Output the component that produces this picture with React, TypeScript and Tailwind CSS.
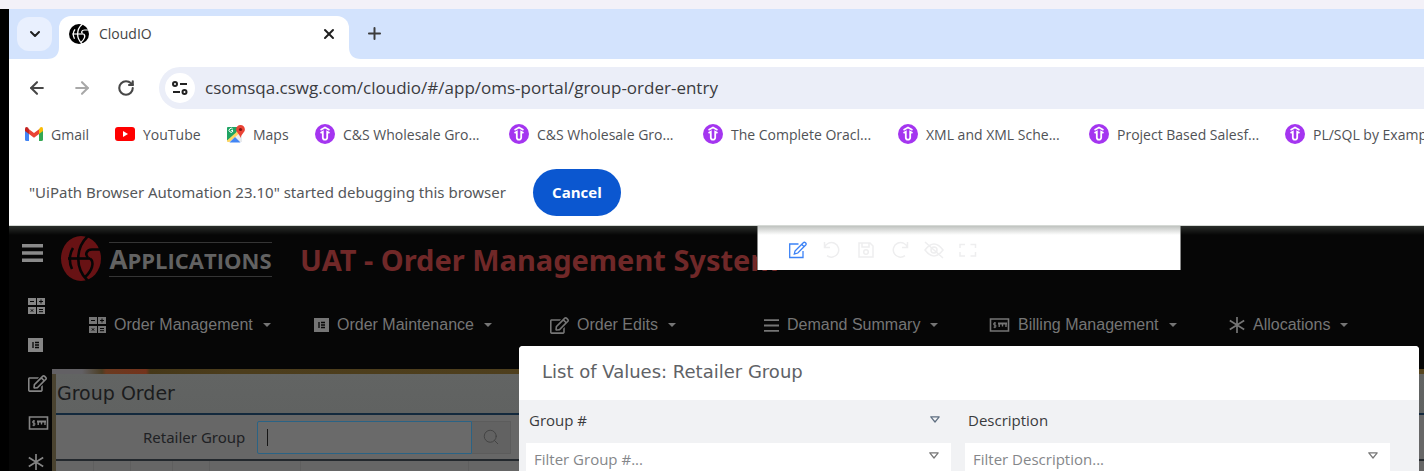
import React from "react";
import { ChevronDown, X, Plus, ArrowLeft, ArrowRight, RotateCw, Search } from "lucide-react";
import { FaRegEdit } from "react-icons/fa";

type IconProps = { className?: string };

function Emblem({ className, mark }: { className?: string; mark: string }) {
  return (
    <svg viewBox="0 0 40 45" className={className} preserveAspectRatio="none" aria-hidden="true">
      <ellipse cx="20" cy="22.5" rx="20" ry="22.5" fill="currentColor" />
      <g fill="none" stroke={mark}>
        <path d="M27 0C14 12 14 33 27 45" strokeWidth="2.600" />
        <path d="M12 12C8 18 8 27 11 33" strokeWidth="2.600" />
        <path d="M7 22.500H29" strokeWidth="2.600" />
        <path d="M40 13.500H31C25 13.500 24 19 27 21.500" strokeWidth="2.600" />
        <path d="M29 22.500C34 26 31 35 24 41" strokeWidth="2.600" />
      </g>
    </svg>
  );
}

function CalcIcon({ className }: IconProps) {
  return (
    <svg viewBox="0 0 17 16" className={className} aria-hidden="true">
      <path d="M0 0h8v7H0zM9 0h8v7H9zM0 9h8v7H0zM9 9h8v7H9z" fill="currentColor" />
      <path d="M2 3.500h4M11 3.500h4M13 1.500v4M2.800 11.300l2.400 2.400M5.200 11.300l-2.400 2.400M11 11.500h4M11 13.700h4" stroke="#060606" strokeWidth="1" fill="none" />
    </svg>
  );
}

function FormIcon({ className }: IconProps) {
  return (
    <svg viewBox="0 0 15 14" className={className} aria-hidden="true">
      <path d="M0 0h15v14H0z" fill="currentColor" />
      <path d="M5 4v6M7 4.500h4M7 7h4M7 9.500h4" stroke="#060606" strokeWidth="1.300" />
    </svg>
  );
}

function CheckIcon({ className }: IconProps) {
  return (
    <svg viewBox="0 0 20 14" className={className} fill="none" stroke="currentColor" aria-hidden="true">
      <path d="M1 1h18v12H1z" strokeWidth="1.600" />
      <path d="M6.500 5H4.300v2H6.300v2.200H4M5.300 4v6.200" strokeWidth="1" />
      <path d="M8.500 5.500h9" strokeWidth="2" />
      <path d="M9.700 5.500V9M13 5.500V8.500M16.500 5.500V9" strokeWidth="1.400" />
    </svg>
  );
}

function AsteriskIcon({ className }: IconProps) {
  return (
    <svg viewBox="0 0 16 16" className={className} stroke="currentColor" strokeWidth="1.700" aria-hidden="true">
      <path d="M8 0v16M0.800 3.500l14.400 9M15.200 3.500l-14.400 9" />
    </svg>
  );
}

function BarsIcon({ className }: IconProps) {
  return (
    <svg viewBox="0 0 14 14" className={className} stroke="currentColor" strokeWidth="1.800" aria-hidden="true">
      <path d="M0 2h14M0 7h14M0 12h14" />
    </svg>
  );
}

function MenuIcon({ className }: IconProps) {
  return (
    <svg viewBox="0 0 21 18" className={className} fill="currentColor" aria-hidden="true">
      <path d="M0 0h21v3.500H0zM0 7.300h21v3.400H0zM0 14.500h21v3.500H0z" />
    </svg>
  );
}

function Triangle({ className }: IconProps) {
  return (
    <svg viewBox="0 0 10 7" className={className} fill="none" stroke="currentColor" strokeLinejoin="round" aria-hidden="true">
      <path d="M0.800 0.800h8.400L5 6z" strokeWidth="1.200" />
    </svg>
  );
}

function GmailIcon() {
  return (
    <svg viewBox="0 0 18 14" className="h-[14px] w-[18px]" aria-hidden="true">
      <path d="M0 2h4v12H1.500Q0 14 0 12.500z" fill="#4285f4" />
      <path d="M14 2h4v10.500Q18 14 16.500 14H14z" fill="#34a853" />
      <path d="M14 2.500 15 .6Q17.900-.9 18 2v2l-4 3z" fill="#fbbc04" />
      <path d="M4 2.500 3 .6Q.1-.9 0 2v2l4 3z" fill="#c5221f" />
      <path d="M4 2.300 9 6l5-3.700V7L9 10.700 4 7z" fill="#ea4335" />
    </svg>
  );
}

function YouTubeIcon() {
  return (
    <svg viewBox="0 0 20 14" className="h-[14px] w-[20px]" aria-hidden="true">
      <rect width="20" height="14" rx="3" fill="#f00" />
      <path d="M8 4l5 3-5 3z" fill="#fff" />
    </svg>
  );
}

function MapsIcon() {
  return (
    <svg viewBox="0 0 19 18" className="h-[18px] w-[19px]" aria-hidden="true">
      <path d="M2 2h14v15H2Q1 17 1 16V3Q1 2 2 2z" fill="#e8eaed" />
      <path d="M2 2h10L10 9 1 16V3Q1 2 2 2z" fill="#1fa463" />
      <path d="M1 15.500 14 4l2 1v1L3.500 17H2Q1 17 1 16z" fill="#fdd663" />
      <path d="M3.500 17.500 9 12l5.500 5.500z" fill="#4285f4" />
      <path d="M7 5.500H5.200M6.800 4.200A2 2 0 1 0 7 6" stroke="#fff" strokeWidth="1" fill="none" />
      <path d="M14.500 0a4.400 4.400 0 0 1 4.400 4.400c0 3-3.400 4-4.400 8.600-1-4.600-4.400-5.600-4.400-8.600A4.400 4.400 0 0 1 14.500 0z" fill="#ea4335" />
      <circle cx="14.500" cy="4.500" r="1.600" fill="#811411" />
    </svg>
  );
}

function CourseIcon() {
  return (
    <svg viewBox="0 0 20 20" className="size-5" aria-hidden="true">
      <circle cx="10" cy="10" r="10" fill="#a435f0" />
      <path d="M5.500 6 10 3.500 14.500 6" fill="none" stroke="#fff" strokeWidth="1.600" />
      <path d="M5.500 9 7.800 7.700v5.800a2.200 2.200 0 0 0 4.400 0V7.700L14.500 9" fill="none" stroke="#fff" strokeWidth="1.800" />
    </svg>
  );
}

const bookmarks = [
  { label: "Gmail", icon: <GmailIcon />, box: "w-[90px]" },
  { label: "YouTube", icon: <YouTubeIcon />, box: "w-[111px]" },
  { label: "Maps", icon: <MapsIcon />, box: "w-[89px]" },
  { label: "C&S Wholesale Gro...", icon: <CourseIcon />, box: "w-[194px]" },
  { label: "C&S Wholesale Gro...", icon: <CourseIcon />, box: "w-[194px]" },
  { label: "The Complete Oracl...", icon: <CourseIcon />, box: "w-[195px]" },
  { label: "XML and XML Sche...", icon: <CourseIcon />, box: "w-[191px]" },
  { label: "Project Based Salesf...", icon: <CourseIcon />, box: "w-[196px]" },
  { label: "PL/SQL by Examp", icon: <CourseIcon />, box: "w-[196px]" },
];

const menus = [
  { label: "Order Management", icon: <CalcIcon className="h-4 w-[17px]" />, box: "w-[225px]" },
  { label: "Order Maintenance", icon: <FormIcon className="h-[14px] w-[15px]" />, box: "w-[236px]" },
  { label: "Order Edits", icon: <FaRegEdit className="size-[19px]" />, box: "w-[214px]" },
  { label: "Demand Summary", icon: <BarsIcon className="size-[15px]" />, box: "w-[225px]" },
  { label: "Billing Management", icon: <CheckIcon className="h-[14px] w-[21px]" />, box: "w-[240px]" },
  { label: "Allocations", icon: <AsteriskIcon className="size-4" />, box: "w-[130px]" },
];

function BrowserChrome() {
  return (
    <header className="bg-white">
      <div className="flex h-[50px] bg-[#d3e3fd] pl-2 pt-[7px]">
        <button aria-label="Search tabs" className="mt-px flex h-[34px] w-[35px] items-center justify-center rounded-xl bg-[#e9f0fe] text-[#1f1f1f]">
          <ChevronDown className="size-4" strokeWidth={3} />
        </button>
        <svg viewBox="0 0 12 12" className="ml-[-5px] size-3 self-end" aria-hidden="true">
          <path d="M12 0v12H0Q12 12 12 0z" fill="#fff" />
        </svg>
        <div className="flex w-[290px] items-center rounded-t-xl bg-white pb-2 pl-[10px] pr-3">
          <Emblem className="size-5 text-black" mark="#fff" />
          <span className="ml-[10px] flex-1 text-[14px] text-[#444]">CloudIO</span>
          <button aria-label="Close tab" className="text-[#1f1f1f]">
            <X className="size-4" strokeWidth={3} />
          </button>
        </div>
        <svg viewBox="0 0 12 12" className="size-3 self-end" aria-hidden="true">
          <path d="M0 0v12h12Q0 12 0 0z" fill="#fff" />
        </svg>
        <button aria-label="New tab" className="mb-2 ml-1 self-center text-[#3c3c3c]">
          <Plus className="size-[19px]" strokeWidth={2.500} />
        </button>
      </div>

      <div className="flex h-[57px] items-center pl-[18px]">
        <button aria-label="Back" className="text-[#474747]"><ArrowLeft className="size-5" strokeWidth={2.500} /></button>
        <button aria-label="Forward" className="ml-[25px] text-[#a8a8a8]"><ArrowRight className="size-5" strokeWidth={2.500} /></button>
        <button aria-label="Reload" className="ml-[25px] text-[#474747]"><RotateCw className="size-[18px]" strokeWidth={2.800} /></button>
        <div className="ml-6 flex h-[42px] flex-1 items-center rounded-l-full bg-[#ebeef8] pl-[6px]">
          <button aria-label="View site information" className="flex size-[30px] shrink-0 items-center justify-center rounded-full bg-white text-[#222]">
            <svg viewBox="0 0 16 14" className="h-[14px] w-4" fill="none" stroke="currentColor" strokeWidth="2" aria-hidden="true">
              <circle cx="3" cy="3" r="2" />
              <path d="M8 3h7M1 11h7" />
              <circle cx="12.500" cy="11" r="2" />
            </svg>
          </button>
          <input
            aria-label="Address"
            className="ml-[10px] min-w-0 flex-1 bg-transparent text-[17px] text-[#3a3b40] outline-none"
            defaultValue="csomsqa.cswg.com/cloudio/#/app/oms-portal/group-order-entry"
          />
        </div>
      </div>

      <nav aria-label="Bookmarks" className="flex h-[36px] items-center overflow-hidden pl-4">
        {bookmarks.map((b, i) => (
          <a key={i} href="#" className={`flex shrink-0 items-center gap-2 whitespace-nowrap text-[14px] text-[#505256] ${b.box}`}>
            {b.icon}
            {b.label}
          </a>
        ))}
      </nav>

      <div className="flex h-[74px] items-center border-b border-[#d5d9d5] pl-5 pt-2 font-['Noto_Sans',sans-serif]">
        <p className="text-[15px] text-[#55575a]">"UiPath Browser Automation 23.10" started debugging this browser</p>
        <button className="ml-[27px] h-[47px] w-[88px] rounded-full bg-[#0b57d0] font-['Open_Sans',sans-serif] text-[15px] font-bold text-white">Cancel</button>
      </div>
    </header>
  );
}

function Toolbar() {
  return (
    <div className="absolute left-[748px] top-0 flex h-[44px] w-[424px] items-center gap-[14px] border-x border-[#888] bg-white pl-[30px] pt-1 text-[#eeeeef]">
      <button aria-label="Edit" className="text-[#3b82f6]">
        <svg viewBox="0 0 20 18" className="h-[18px] w-5" fill="none" stroke="currentColor" strokeWidth="1.300" aria-hidden="true">
          <path d="M10.500 3H1.700v13.500H15V10M7 10l8.300-8.300q1-1 2.200 0 1.200 1.200.2 2.300L9.800 12l-3.500 1zM13.700 3.300l2.400 2.400" />
        </svg>
      </button>
      <button aria-label="Undo">
        <svg viewBox="0 0 20 18" className="h-[18px] w-5" fill="none" stroke="currentColor" strokeWidth="1.500" aria-hidden="true">
          <path d="M2.500 1v5.500H8M2.500 6.500A7.300 7.300 0 1 1 5 14.700" />
        </svg>
      </button>
      <button aria-label="Save">
        <svg viewBox="0 0 20 18" className="h-[18px] w-5" fill="none" stroke="currentColor" strokeWidth="1.500" aria-hidden="true">
          <path d="M3 2h11l3 3v11H3zM6 2v4h7V2" />
          <circle cx="10" cy="11" r="2.300" />
        </svg>
      </button>
      <button aria-label="Redo">
        <svg viewBox="0 0 20 18" className="h-[18px] w-5" fill="none" stroke="currentColor" strokeWidth="1.500" aria-hidden="true">
          <path d="M17.500 1v5.500H12M17.500 6.500A7.300 7.300 0 1 0 15 14.700" />
        </svg>
      </button>
      <button aria-label="Hide">
        <svg viewBox="0 0 20 18" className="h-[18px] w-5" fill="none" stroke="currentColor" strokeWidth="1.500" aria-hidden="true">
          <path d="M1 9q9-12 18 0-9 12-18 0zM1 1l18 16" />
          <circle cx="10" cy="9" r="3" />
        </svg>
      </button>
      <button aria-label="Full screen">
        <svg viewBox="0 0 20 18" className="h-[18px] w-5" fill="none" stroke="currentColor" strokeWidth="1.500" aria-hidden="true">
          <path d="M2 7V3.500h5M12.500 3.500h5V7M17.500 11v4h-5M7 15H2v-4" />
        </svg>
      </button>
    </div>
  );
}

function ValuesDialog() {
  return (
    <section role="dialog" aria-label="List of Values: Retailer Group" className="absolute bottom-0 left-[510px] right-[5px] top-[120px] flex flex-col overflow-hidden rounded-t-[4px] bg-[#f1f2f4]">
      <h2 className="flex h-[54px] shrink-0 items-center bg-white pb-1 pl-[23px] font-['DejaVu_Sans',sans-serif] text-[18px] text-[#606266]">
        List of Values: Retailer Group
      </h2>
      <div className="grid grid-cols-2 gap-x-[14px] pl-[7px] pr-[29px]">
        <div className="flex h-[43px] items-center justify-between pb-[2px] pl-[3px] pr-[11px] text-[15px] text-[#3a3b3d]">
          Group #
          <Triangle className="mb-[2px] h-[7px] w-[10px] text-[#5f6f80]" />
        </div>
        <div className="flex h-[43px] items-center pb-[2px] pl-[3px] text-[15px] text-[#3a3b3d]">Description</div>
        {["Filter Group #...", "Filter Description..."].map((text) => (
          <div key={text} className="flex h-[36px] items-start bg-white pl-2 pr-3">
            <input aria-label={text} placeholder={text} className="h-[32px] min-w-0 flex-1 bg-transparent text-[15px] outline-none placeholder:text-[#85878a]" />
            <Triangle className="mt-[9px] h-[7px] w-[10px] text-[#777]" />
          </div>
        ))}
      </div>
    </section>
  );
}

function Portal() {
  return (
    <main className="relative flex h-[245px] overflow-hidden bg-[#060606]">
      <aside className="flex w-[43px] shrink-0 flex-col text-[#858585]">
        <button aria-label="Menu" className="ml-[13px] mt-[18px] text-[#8a8a8a]"><MenuIcon className="h-[18px] w-[21px]" /></button>
        <div className="mt-6 flex flex-col pl-[19px]">
          <a href="#" aria-label="Order Management" className="flex h-[39px] items-center"><CalcIcon className="h-4 w-[17px]" /></a>
          <a href="#" aria-label="Order Maintenance" className="flex h-[39px] items-center"><FormIcon className="h-[14px] w-[15px]" /></a>
          <a href="#" aria-label="Order Edits" className="flex h-[39px] items-center"><FaRegEdit className="size-[19px]" /></a>
          <a href="#" aria-label="Billing Management" className="flex h-[39px] items-center"><CheckIcon className="h-[14px] w-[21px]" /></a>
          <a href="#" aria-label="Allocations" className="flex h-[39px] items-center"><AsteriskIcon className="size-4" /></a>
        </div>
      </aside>

      <div className="flex min-w-0 flex-1 flex-col">
        <div className="flex h-[68px] items-center pl-[9px]">
          <Emblem className="mb-1 h-[45px] w-[40px] text-[#681214]" mark="#060606" />
          <div className="mb-[2px] ml-2 flex h-[35px] w-[163px] items-center justify-center border-y border-[#353535]">
            <span className="flex items-baseline font-bold leading-none text-[#626262]">
              <span className="text-[26px]">A</span>
              <span className="text-[22px]">PPLICATIONS</span>
            </span>
          </div>
          <h1 className="ml-7 whitespace-nowrap font-['Noto_Sans',sans-serif] text-[29px] font-bold text-[#702828]">UAT - Order Management System</h1>
        </div>
        <nav aria-label="Main" className="flex h-[75px] items-start pl-[37px] pt-[19px] font-['Liberation_Sans',Arial,sans-serif] text-[16px] text-[#757575]">
          {menus.map((m) => (
            <a key={m.label} href="#" className={`flex shrink-0 items-center gap-2 whitespace-nowrap ${m.box}`}>
              {m.icon}
              {m.label}
              <svg viewBox="0 0 8 4" className="ml-[2px] h-1 w-2" aria-hidden="true"><path d="M0 0h8L4 4z" fill="currentColor" /></svg>
            </a>
          ))}
        </nav>

        <div className="flex flex-1 flex-col bg-[linear-gradient(90deg,#626064_0px,#626064_30px,#4b3d23_50px,#6b3a20_54px,#74331c_94px,#463818_98px,#4c3d1c_180px,#564520)] pt-[5px]">
          <div className="flex flex-1 border-l-4 border-[#4a4330]">
            <div className="flex flex-1 flex-col bg-[#676767]">
              <h2 className="flex h-[41px] shrink-0 items-center border-b-2 border-[#13293d] bg-linear-to-b from-[#626463] to-[#606261] pl-px font-['DejaVu_Sans',sans-serif] text-[19px] text-[#1b1c1d]">
                Group Order
              </h2>
              <div className="flex h-[46px] shrink-0 items-center border-b-2 border-[#23282d] pl-[87px]">
                <label htmlFor="retailer" className="w-[105px] whitespace-nowrap font-['Noto_Sans',sans-serif] text-[15px] text-[#202124]">Retailer Group</label>
                <div className="ml-[9px] flex h-[33px] w-[215px] items-center rounded-l-[2px] border border-[#2a6385] bg-[#6a6a6a] px-[9px]">
                  <span className="h-[17px] w-px bg-[#161616]" />
                  <input id="retailer" className="min-w-0 flex-1 bg-transparent text-[15px] text-[#111] outline-none" />
                </div>
                <button aria-label="Search" className="flex h-[33px] w-[39px] items-center justify-center border border-l-0 border-[#5c5c5c] bg-[#626262] text-[#434343]">
                  <Search className="size-[18px]" strokeWidth={1.300} />
                </button>
              </div>
              <div className="grid flex-1 grid-cols-[38px_37px_42px_37px_91px_168px_1fr] divide-x divide-[#5f5f5f] bg-[#666]">
                <span /><span /><span /><span /><span /><span /><span />
              </div>
            </div>
          </div>
        </div>
      </div>

      <Toolbar />
      <div className="pointer-events-none absolute inset-x-0 top-0 h-[9px] bg-linear-to-b from-[#606860]/40 to-transparent" />
      <ValuesDialog />
    </main>
  );
}

export default function App() {
  return (
    <div className="bg-[#f3f1f8] pt-[9px] font-['Open_Sans',sans-serif]">
      <div className="border-l-[9px] border-black">
        <BrowserChrome />
        <Portal />
      </div>
    </div>
  );
}
